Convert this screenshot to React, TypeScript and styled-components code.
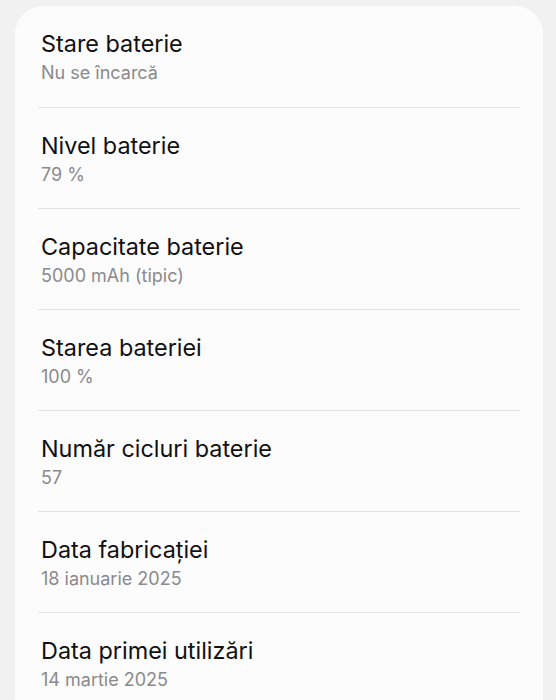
import React from 'react';
import styled, { createGlobalStyle } from 'styled-components';

const GlobalStyle = createGlobalStyle`
  html, body {
    margin: 0;
    padding: 0;
    background-color: #f1f1f1;
    font-family: Inter, Roboto, "Noto Sans", sans-serif;
  }
`;

const Screen = styled.div`
  height: 700px;
  overflow: hidden;
  padding: 6px 13px 0 15px;
`;

const Card = styled.section`
  background-color: #fcfcfd;
  border-radius: 28px;
  padding: 0 23px;
  min-height: 720px;
`;

const Row = styled.div<{ $first?: boolean }>`
  height: 101px;
  padding-left: 3px;
  display: flex;
  flex-direction: column;
  border-top: ${(p) => (p.$first ? 'none' : '1.5px solid #e3e3e4')};
  box-sizing: border-box;
`;

const Title = styled.div`
  margin-top: 24px;
  font-size: 23.4px;
  line-height: 28px;
  color: #111112;
`;

const Value = styled.div`
  margin-top: 3px;
  font-size: 18px;
  line-height: 24px;
  color: #8a8a8c;
`;

const items = [
  { title: 'Stare baterie', value: 'Nu se încarcă' },
  { title: 'Nivel baterie', value: '79 %' },
  { title: 'Capacitate baterie', value: '5000 mAh (tipic)' },
  { title: 'Starea bateriei', value: '100 %' },
  { title: 'Număr cicluri baterie', value: '57' },
  { title: 'Data fabricației', value: '18 ianuarie 2025' },
  { title: 'Data primei utilizări', value: '14 martie 2025' },
];

const App: React.FC = () => {
  return (
    <>
      <GlobalStyle />
      <Screen>
        <Card>
          {items.map((item, i) => (
            <Row key={item.title} $first={i === 0}>
              <Title>{item.title}</Title>
              <Value>{item.value}</Value>
            </Row>
          ))}
        </Card>
      </Screen>
    </>
  );
};

export default App;
